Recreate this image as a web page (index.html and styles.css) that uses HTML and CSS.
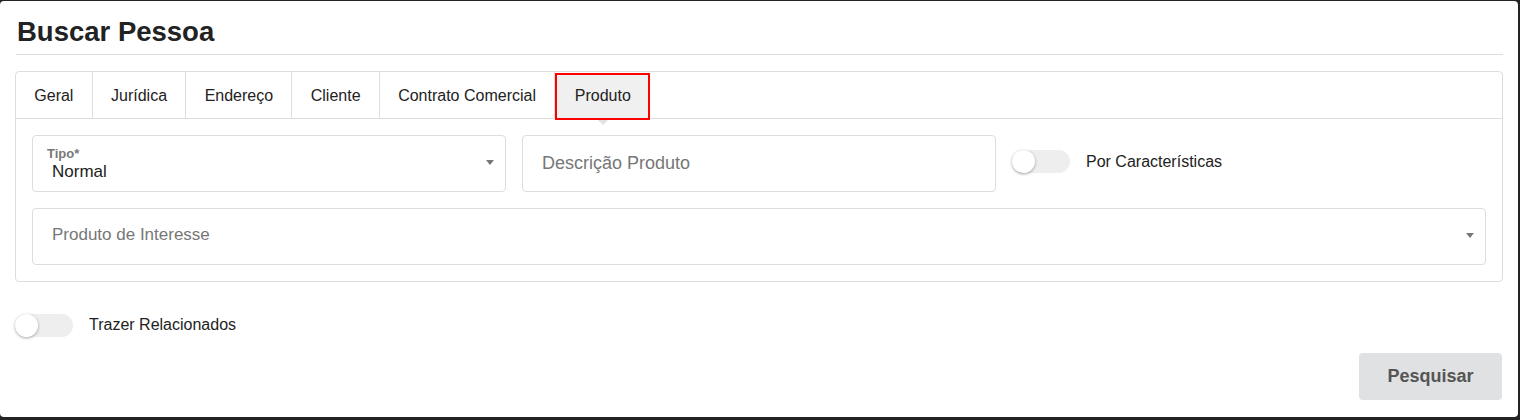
FILE: index.html
```html
<!DOCTYPE html>
<html lang="pt">
<head>
<meta charset="utf-8">
<title>Buscar Pessoa</title>
<link rel="stylesheet" href="styles.css">
</head>
<body>
<div class="card">
  <div class="header">
    <h1 class="title">Buscar Pessoa</h1>
  </div>
  <div class="tabs">
    <div class="tabbar">
      <div class="tab">Geral</div>
      <div class="tab">Jurídica</div>
      <div class="tab">Endereço</div>
      <div class="tab">Cliente</div>
      <div class="tab">Contrato Comercial</div>
      <div class="tab tab-active">Produto<span class="tab-arrow"></span></div>
    </div>
    <div class="panel">
      <div class="field select">
        <div class="select-text">
          <div class="field-label">Tipo*</div>
          <div class="field-value">Normal</div>
        </div>
        <span class="caret"></span>
      </div>
      <div class="field input">
        <span class="placeholder big">Descrição Produto</span>
      </div>
      <div class="switch-row top-switch">
        <span class="switch"><span class="knob"></span></span>
        <span class="switch-label">Por Características</span>
      </div>
      <div class="field select full">
        <span class="placeholder up">Produto de Interesse</span>
        <span class="caret"></span>
      </div>
    </div>
  </div>
  <div class="switch-row bottom-switch">
    <span class="switch"><span class="knob"></span></span>
    <span class="switch-label">Trazer Relacionados</span>
  </div>
  <div class="actions">
    <button class="btn">Pesquisar</button>
  </div>
</div>
</body>
</html>
```
FILE: styles.css
```css
* { box-sizing: border-box; }
html, body { margin: 0; padding: 0; }
body {
  background: #232323;
  font-family: "Liberation Sans", Arial, sans-serif;
  color: #222;
  width: 1520px;
  height: 420px;
  overflow: hidden;
}
.card {
  margin-top: 1px;
  width: 1518px;
  height: 416px;
  background: #fff;
  border-radius: 4px;
  padding: 0 15px 0 16px;
}
.header {
  padding-top: 15px;
  padding-bottom: 6px;
  border-bottom: 1px solid #ddd;
}
.title {
  margin: 0;
  font-size: 27.5px;
  line-height: 32px;
  font-weight: bold;
  color: #222;
  padding-left: 1px;
}
.tabs {
  margin-top: 16px;
  margin-left: -1px;
  border: 1px solid #ddd;
  border-radius: 4px;
}
.tabbar {
  display: flex;
  height: 47px;
  border-bottom: 1px solid #ddd;
}
.tab {
  position: relative;
  padding: 2px 18.3px 0;
  height: 46px;
  line-height: 44px;
  font-size: 16px;
  color: #222;
  border-right: 1px solid #ddd;
}
.tab-active {
  border-right: none;
  padding: 2px 19.5px 0 19.5px;
  height: 47px;
  background: #f0f0f0;
  outline: 2.5px solid #f00;
  outline-offset: -2.5px;
  margin-top: 1px;
  line-height: 42px;
}
.tab-arrow {
  position: absolute;
  left: 50%;
  top: 47px;
  margin-left: -5px;
  width: 0;
  height: 0;
  border-left: 5px solid transparent;
  border-right: 5px solid transparent;
  border-top: 5px solid #e2e2e2;
}
.panel {
  padding: 16px;
  display: grid;
  grid-template-columns: repeat(3, 1fr);
  column-gap: 16px;
  row-gap: 16px;
}
.field {
  position: relative;
  height: 57px;
  border: 1px solid #ddd;
  border-radius: 4px;
  display: flex;
  align-items: center;
}
.field.full { grid-column: 1 / 4; }
.select-text {
  align-self: flex-start;
  padding: 10px 0 0 14px;
}
.field-label {
  font-size: 13px;
  line-height: 15px;
  font-weight: bold;
  color: #777;
}
.field-value {
  font-size: 17px;
  line-height: 20px;
  color: #222;
  padding-left: 5px;
  margin-top: 1px;
}
.caret {
  position: absolute;
  right: 11px;
  top: 24px;
  width: 0;
  height: 0;
  border-left: 4.5px solid transparent;
  border-right: 4.5px solid transparent;
  border-top: 5px solid #777;
}
.placeholder {
  padding-left: 19px;
  font-size: 17px;
  color: #777;
}
.placeholder.up { margin-top: -3px; }
.placeholder.big { font-size: 18px; }
.switch-row {
  display: flex;
  align-items: center;
  gap: 16px;
}
.top-switch { padding-bottom: 4px; }
.switch {
  position: relative;
  width: 58px;
  height: 23px;
  border-radius: 12px;
  background: #eee;
  flex: none;
}
.knob {
  position: absolute;
  left: 0;
  top: 0;
  width: 23px;
  height: 23px;
  border-radius: 50%;
  background: #fff;
  box-shadow: 0 1px 3px rgba(0,0,0,0.35);
}
.switch-label {
  font-size: 16px;
  color: #222;
}
.bottom-switch {
  margin-top: 31px;
  margin-left: -1px;
  height: 24px;
}
.actions {
  display: flex;
  justify-content: flex-end;
  margin-top: 16px;
  margin-right: 1px;
}
.btn {
  width: 143px;
  height: 47px;
  border: none;
  border-radius: 4px;
  background: #e0e1e2;
  color: #555;
  font-family: "Liberation Sans", Arial, sans-serif;
  font-size: 18px;
  font-weight: bold;
  padding: 0;
}
```
